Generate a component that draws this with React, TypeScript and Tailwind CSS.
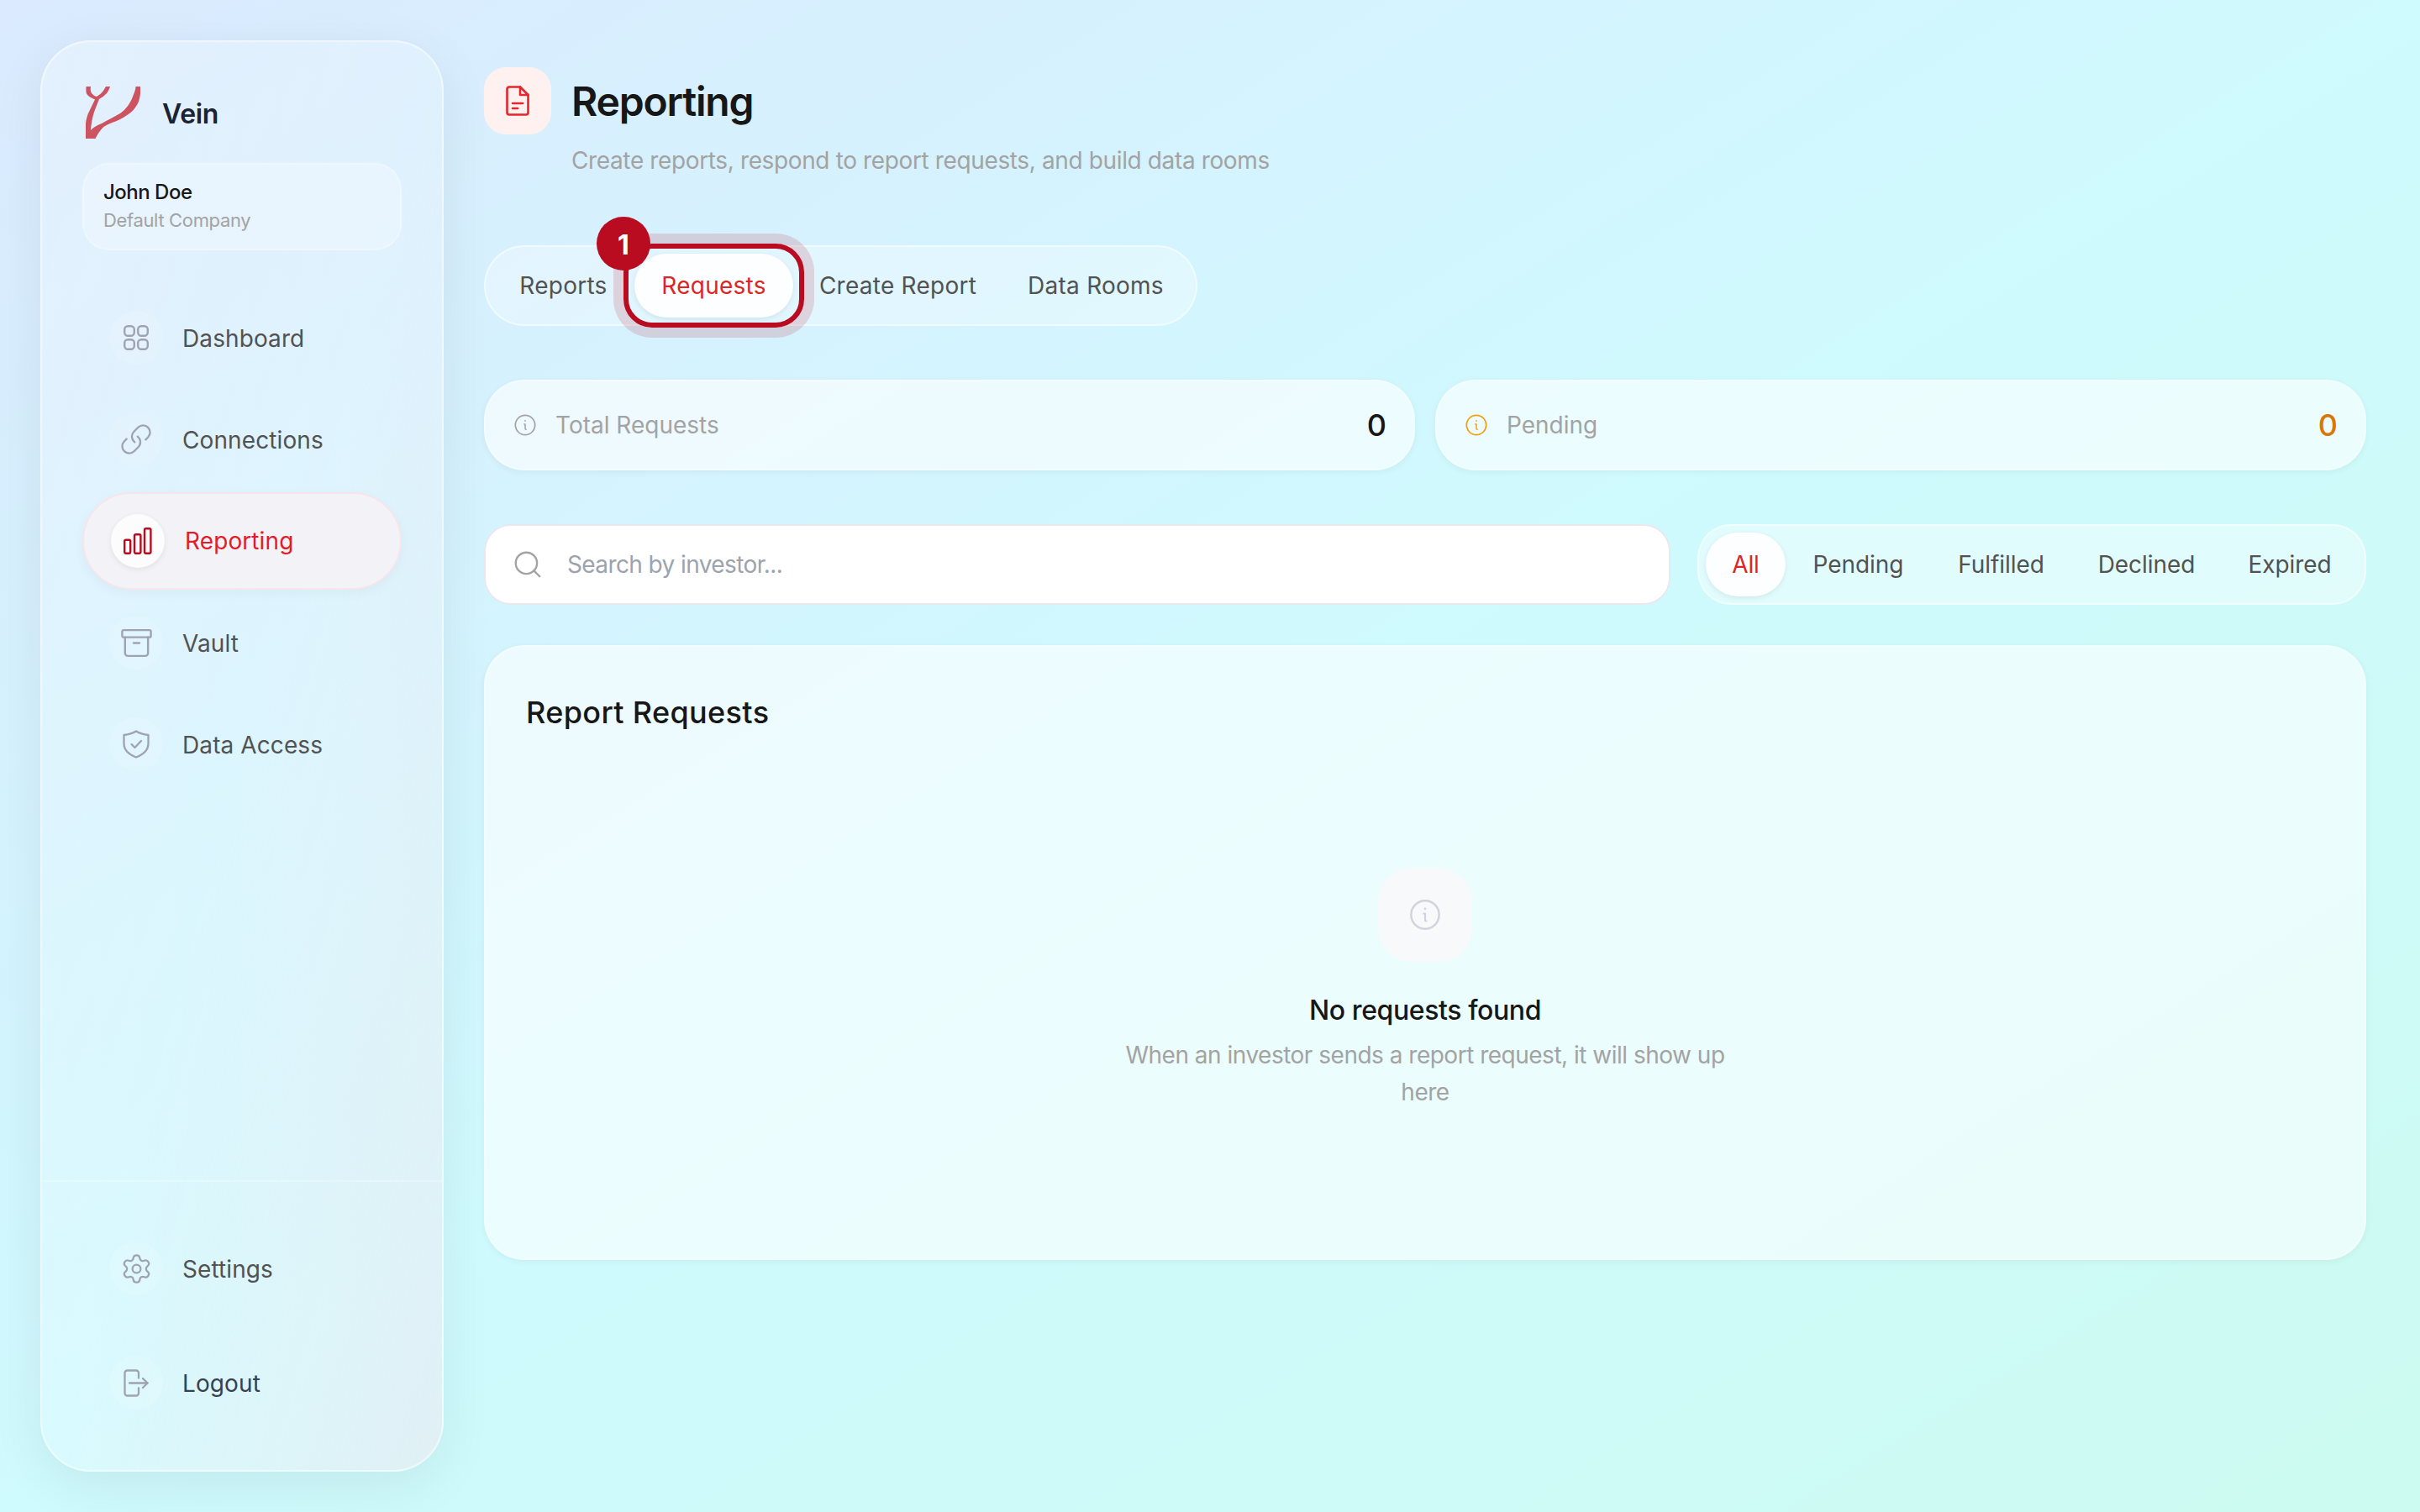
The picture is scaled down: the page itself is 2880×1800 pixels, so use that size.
import React from "react";
import { Link as LinkIcon, Archive, Settings, Search } from "lucide-react";

function InfoIcon({ className }: { className: string }) {
  return (
    <svg viewBox="0 0 24 24" fill="none" stroke="currentColor" strokeWidth="1.5" strokeLinecap="round" strokeLinejoin="round" className={className}>
      <circle cx="12" cy="12" r="10" />
      <path d="M12 7.6v.2" />
      <path d="M11 11.2h1v4.2c0 .7.4 1.1 1 1.1" strokeWidth="1.3" />
    </svg>
  );
}

function GridIcon() {
  return (
    <svg viewBox="0 0 30 30" fill="none" stroke="currentColor" strokeWidth="2.4" className="w-[30px] h-[30px]">
      <rect x="1.2" y="1.2" width="11.6" height="11.6" rx="4" />
      <rect x="17.2" y="1.2" width="11.6" height="11.6" rx="4" />
      <rect x="1.2" y="17.2" width="11.6" height="11.6" rx="4" />
      <rect x="17.2" y="17.2" width="11.6" height="11.6" rx="4" />
    </svg>
  );
}

function ShieldIcon() {
  return (
    <svg viewBox="0 0 32 34" fill="none" stroke="currentColor" strokeWidth="2.3" strokeLinecap="round" strokeLinejoin="round" className="w-[32px] h-[34px]">
      <path d="M16 1.500C20 4 25 5.500 30.500 6V16C30.500 24.500 24 29.500 16 32.500C8 29.500 1.500 24.500 1.500 16V6C7 5.500 12 4 16 1.500Z" />
      <path d="M10.500 17l4 4 7.500-8" />
    </svg>
  );
}

function LogoutIcon() {
  return (
    <svg viewBox="0 0 30 33" fill="none" stroke="currentColor" strokeWidth="2.3" strokeLinecap="round" strokeLinejoin="round" className="w-[30px] h-[33px]">
      <path d="M18 10.500V4.500a3 3 0 0 0-3-3H4.500a3 3 0 0 0-3 3v24a3 3 0 0 0 3 3H15a3 3 0 0 0 3-3V22.500" />
      <path d="M7 16.500h21.500" />
      <path d="M23 11l5.500 5.500L23 22" />
    </svg>
  );
}

function BarsIcon() {
  return (
    <svg viewBox="0 0 34 32" fill="none" stroke="#b90c20" strokeWidth="2.4" className="w-[34px] h-[32px]">
      <rect x="1.2" y="14.7" width="7" height="16" rx="1.6" />
      <rect x="13" y="8.2" width="7.4" height="22.5" rx="1.6" />
      <rect x="25" y="1.2" width="7.4" height="29.5" rx="1.6" />
    </svg>
  );
}

function DocIcon() {
  return (
    <svg viewBox="0 0 28 36" fill="none" stroke="#e5262d" strokeWidth="2.6" strokeLinecap="round" strokeLinejoin="round" className="w-[28px] h-[36px]">
      <path d="M17 1.5H4a2.5 2.5 0 0 0-2.5 2.5v28A2.5 2.5 0 0 0 4 34.5h20a2.5 2.5 0 0 0 2.5-2.5V11z" />
      <path d="M17 1.5V11h9.5" />
      <path d="M8 21h12" />
      <path d="M8 27h6" />
    </svg>
  );
}

function Logo() {
  return (
    <svg viewBox="0 0 65 62" className="w-[65px] h-[62px]">
      <path
        fill="#cd5360"
        d="M0 62V44C0.5 39 1.5 36 3 32L11 15.500C7 13.500 2.500 11.500 1 8.500C0 5.500 .5 2.500 .5 0H6C5.500 3 5.500 5.500 7 8C9 10.500 11 11.500 13 12C16 10 19 8 21 5L24 0H29C28 3.500 26.500 6 25 8C22.500 11 19 13 16 15L10.500 29C8 36 6.500 44 6 52C9 48.500 14 46 19 44C25 40.500 33 36.500 41 32C48 27 53 20 56 12C57.500 8 59.500 4 59.500 0H65V8C64.500 13 63.500 18 61 22C58 27 54.500 31 50 33.500C47 35.500 44 37.500 41 39C36 41.500 28 44 23 47C19 49.500 14.500 56 11.500 62Z"
      />
    </svg>
  );
}

function NavRow({ icon, label, textClass = "text-[#525252]" }: { icon: React.ReactNode; label: string; textClass?: string }) {
  return (
    <div className="h-[112px] flex items-center pl-[32px] gap-[23px]">
      <div className="w-[64px] h-[64px] rounded-full bg-white/10 flex items-center justify-center text-[#a0a2b2] shrink-0">{icon}</div>
      <span className={"text-[28px] font-normal tracking-[0.1px] relative top-[1px] " + textClass}>{label}</span>
    </div>
  );
}

function Stat({ label, value, iconClass, valueClass }: { label: string; value: string; iconClass: string; valueClass: string }) {
  return (
    <div className="h-[108px] rounded-[48px] bg-white/60 border-2 border-white/30 shadow-[0_2px_8px_rgba(0,0,0,0.05)] flex items-center justify-between pl-[33px] pr-[32px]">
      <div className="flex items-center gap-[22px]">
        <InfoIcon className={"w-[28px] h-[28px] " + iconClass} />
        <span className="text-[28px] text-[#a3a3a3] tracking-[0px]">{label}</span>
      </div>
      <span className={"text-[36px] font-medium leading-none " + valueClass}>{value}</span>
    </div>
  );
}

function Tab({ label, width, wide = false, active = false }: { label: string; width: string; wide?: boolean; active?: boolean }) {
  return (
    <div
      className={
        width +
        " h-[76px] flex items-center justify-center rounded-full text-[28px] font-normal " +
        (wide ? "tracking-[0.25px] " : "tracking-[-0.05px] ") +
        (active ? "bg-[#fdfeff] text-[#dc2626] shadow-[0_2px_6px_rgba(0,0,0,0.08)]" : "text-[#525252]")
      }
    >
      {label}
    </div>
  );
}

export default function App() {
  return (
    <div className="h-screen w-full overflow-hidden bg-linear-to-br from-[#dbeafe] via-[#cffafe] to-[#ccfbf1] flex items-start pl-[48px] pr-[64px] pt-[48px] gap-[48px] font-['Inter',sans-serif]">
      <aside className="w-[480px] h-[1704px] shrink-0 rounded-[60px] border-2 border-white/50 bg-linear-to-br from-white/25 via-white/20 to-[#f3e6ee]/50 shadow-[0_16px_64px_rgba(0,0,0,0.07)] flex flex-col">
        <div className="flex-1 px-[48px] pt-[53px]">
          <div className="flex items-center gap-[26px] pl-[4px] h-[62px]">
            <Logo />
            <span className="text-[32px] font-semibold text-[#1a2233] tracking-[-0.3px] relative top-[2px]">Vein</span>
          </div>
          <div className="mt-[29px] h-[104px] rounded-[32px] bg-white/25 border-2 border-white/25 pl-[23px] pb-[2px] flex flex-col justify-center">
            <span className="text-[24px] leading-[34px] font-medium text-[#171717] tracking-[-0.5px]">John Doe</span>
            <span className="text-[22px] leading-[32px] text-[#a3a3a3] tracking-[-0.35px]">Default Company</span>
          </div>
          <nav className="mt-[48px] flex flex-col gap-[9px]">
            <NavRow icon={<GridIcon />} label="Dashboard" />
            <NavRow icon={<LinkIcon className="w-[40px] h-[40px] -scale-x-100 rotate-90" strokeWidth={1.4} />} label="Connections" />
            <div className="h-[116px] -my-[2px] rounded-full border-2 border-[#f6e6ea] bg-[#f3f2f7] shadow-[0_4px_14px_rgba(0,0,0,0.04)] flex items-center pl-[32px] gap-[24px]">
              <div className="w-[64px] h-[64px] rounded-full bg-[#fcfcfd] shadow-[0_2px_6px_rgba(0,0,0,0.08)] flex items-center justify-center shrink-0">
                <BarsIcon />
              </div>
              <span className="text-[28px] font-normal text-[#e11d2a] tracking-[0.1px]">Reporting</span>
            </div>
            <NavRow icon={<Archive className="w-[41px] h-[41px]" strokeWidth={1.4} />} label="Vault" />
            <NavRow icon={<ShieldIcon />} label="Data Access" />
          </nav>
        </div>
        <div className="border-t-2 border-white/25 px-[48px] pt-[47px] pb-[48px] flex flex-col gap-[24px]">
          <NavRow icon={<Settings className="w-[39px] h-[39px]" strokeWidth={1.4} />} label="Settings" />
          <NavRow icon={<LogoutIcon />} label="Logout" textClass="text-[#374151]" />
        </div>
      </aside>

      <main className="flex-1 pt-[32px] flex flex-col">
        <div className="flex items-center gap-[24px] h-[80px]">
          <div className="w-[80px] h-[80px] rounded-[26px] bg-[#fff1f0] flex items-center justify-center">
            <DocIcon />
          </div>
          <h1 className="text-[48px] font-semibold text-[#171717] tracking-[-1.2px] relative top-[1px]">Reporting</h1>
        </div>
        <p className="mt-[11px] mb-[1px] pl-[104px] text-[28px] leading-[40px] text-[#a3a3a3] tracking-[-0.37px]">
          Create reports, respond to report requests, and build data rooms
        </p>

        <div className="mt-[80px] relative self-start w-[849px] h-[96px] rounded-[48px] border-2 border-white/50 bg-white/30 p-[8px] flex items-center">
          <Tab label="Reports" width="w-[169px]" wide />
          <Tab label="Requests" width="w-[189px]" wide active />
          <Tab label="Create Report" width="w-[249px]" wide />
          <Tab label="Data Rooms" width="w-[222px]" wide />
          <div className="absolute left-[164px] top-[-4px] w-[215px] h-[100px] rounded-[34px] border-[6px] border-[#b90c20] shadow-[0_0_0_12px_rgba(185,12,32,0.15)]" />
          <div className="absolute left-[132px] top-[-36px] w-[64px] h-[64px] rounded-full bg-[#b90c20] text-white text-[32px] font-bold flex items-center justify-center pt-[3px]">1</div>
        </div>

        <div className="mt-[64px] grid grid-cols-2 gap-[24px]">
          <Stat label="Total Requests" value="0" iconClass="text-[#a3a3a3]" valueClass="text-[#171717]" />
          <Stat label="Pending" value="0" iconClass="text-[#f59e0b]" valueClass="text-[#d97706]" />
        </div>

        <div className="mt-[64px] flex items-center gap-[32px]">
          <div className="flex-1 h-[96px] rounded-[32px] bg-white border-2 border-[#e9e8ee] flex items-center pl-[31px] gap-[28px]">
            <Search className="w-[38px] h-[38px] text-[#a3a3a3]" strokeWidth={1.5} />
            <span className="text-[28px] text-[#9ca3af] tracking-[-0.6px]">Search by investor...</span>
          </div>
          <div className="w-[796px] h-[96px] rounded-[40px] border-2 border-white/50 bg-white/40 p-[8px] flex items-center">
            <Tab label="All" width="w-[95px]" active />
            <Tab label="Pending" width="w-[173px]" />
            <Tab label="Fulfilled" width="w-[167px]" />
            <Tab label="Declined" width="w-[179px]" />
            <Tab label="Expired" width="w-[162px]" />
          </div>
        </div>

        <section className="mt-[48px] h-[732px] rounded-[48px] bg-white/60 border-2 border-white/30 shadow-[0_2px_8px_rgba(0,0,0,0.05)] px-[48px] pt-[48px]">
          <h2 className="text-[36px] leading-[60px] font-medium text-[#171717] tracking-[0.35px]">Report Requests</h2>
          <div className="mt-[155px] flex flex-col items-center">
            <div className="w-[112px] h-[112px] rounded-[40px] bg-[#f7f9fb] flex items-center justify-center">
              <InfoIcon className="w-[40px] h-[40px] text-[#d1d5db]" />
            </div>
            <h3 className="mt-[34px] mb-[-2px] text-[32px] leading-[48px] font-medium text-[#171717] tracking-[-0.4px]">No requests found</h3>
            <p className="mt-[9px] w-[768px] text-center text-[28px] leading-[44px] text-[#a3a3a3] tracking-[-0.5px]">
              When an investor sends a report request, it will show up here
            </p>
          </div>
        </section>
      </main>
    </div>
  );
}
